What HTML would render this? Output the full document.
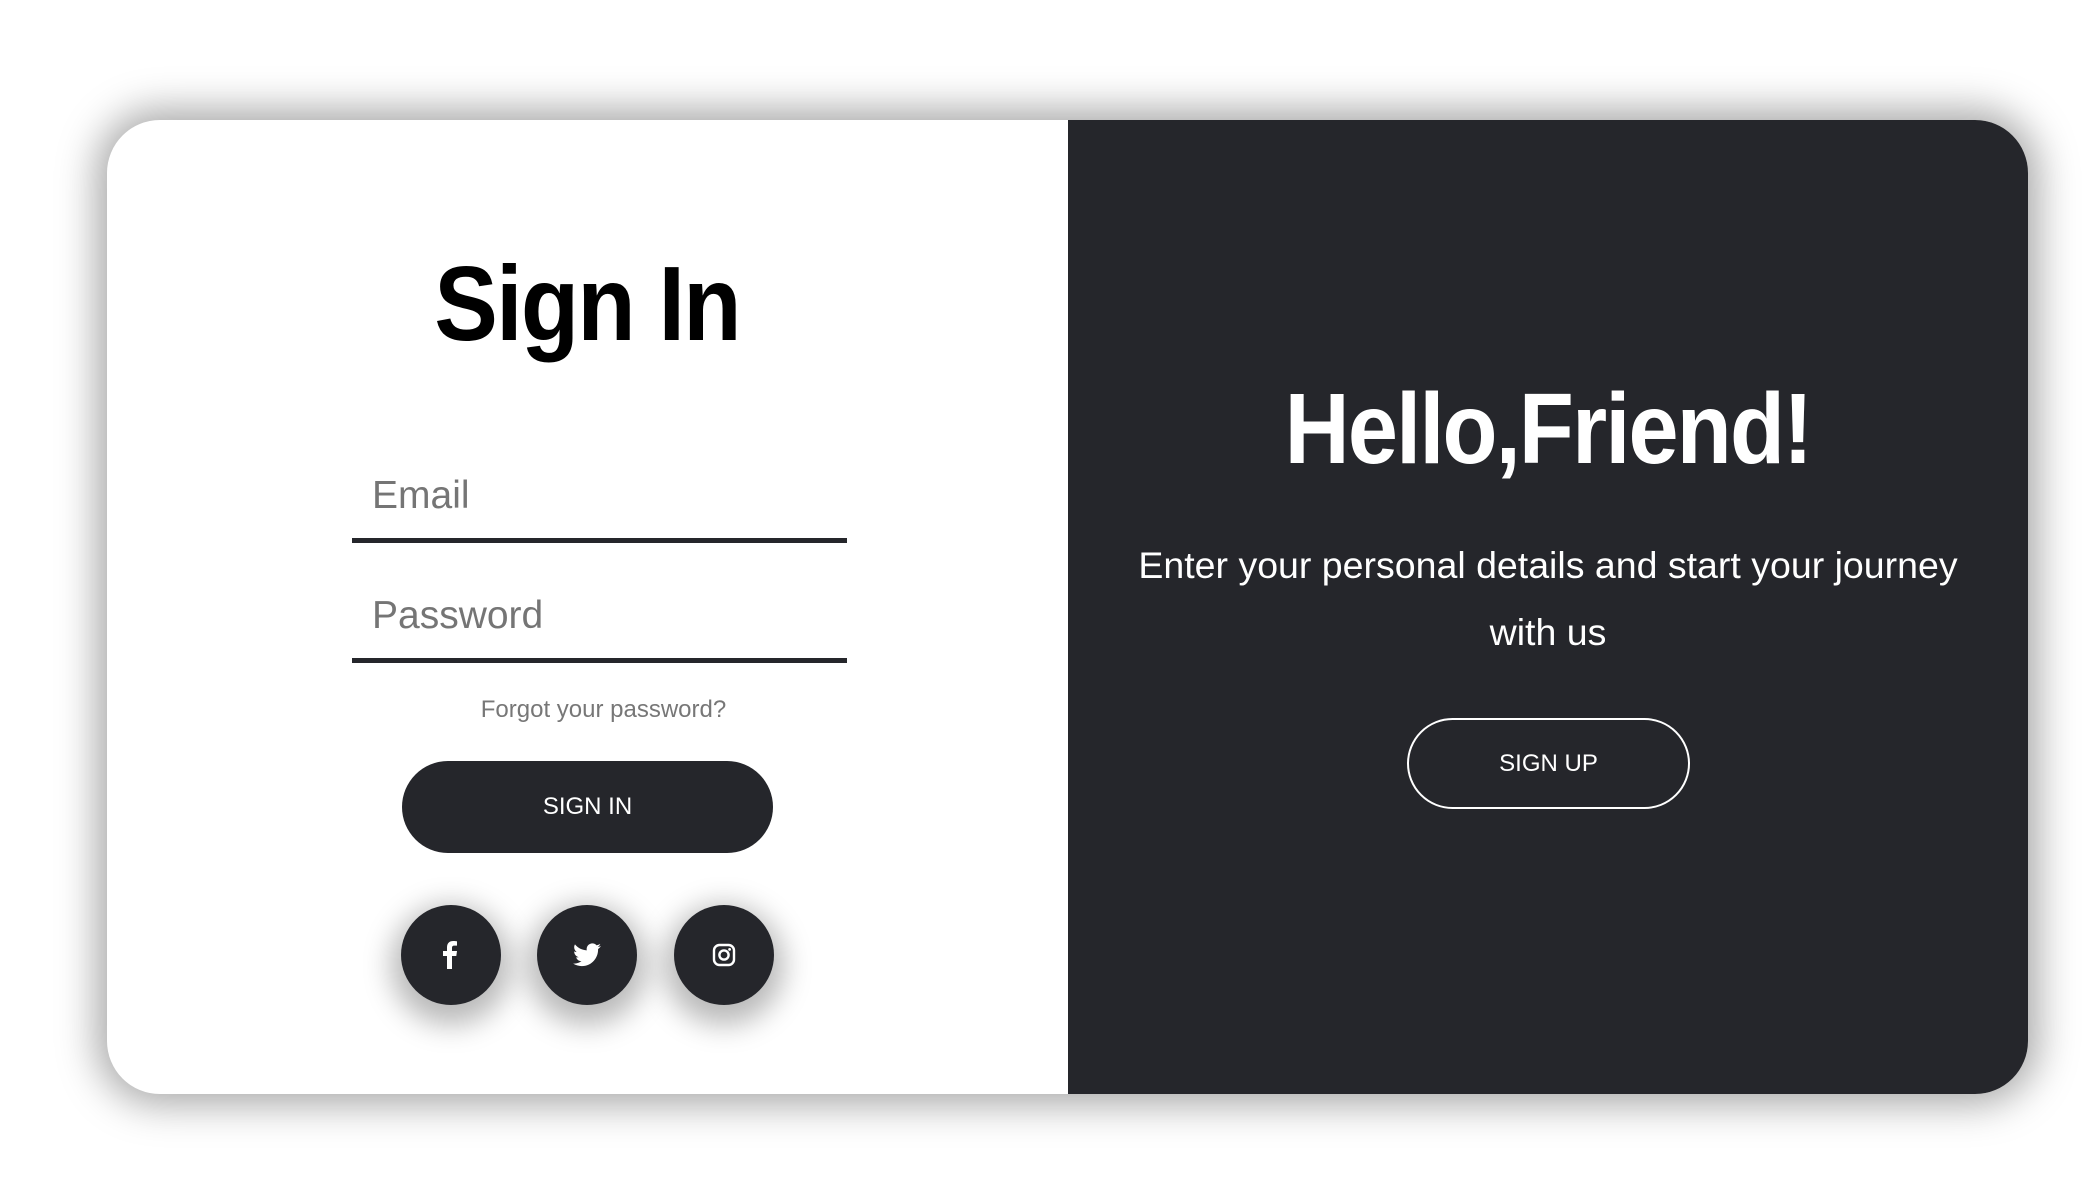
<!DOCTYPE html>
<html><head><meta charset="utf-8"><style>
*{margin:0;padding:0;box-sizing:border-box}
body{width:2097px;height:1191px;background:#fff;font-family:"Liberation Sans",Arial,sans-serif;position:relative;overflow:hidden}
.card{position:absolute;left:107px;top:120px;width:1921px;height:974px;border-radius:53px;background:#fff;box-shadow:0 0 40px 10px rgba(0,0,0,.35);overflow:hidden}
.right{position:absolute;left:961px;top:0;width:960px;height:974px;background:#25262b}
.a{position:absolute;white-space:nowrap}
.line{position:absolute;left:245px;width:495px;height:5px;background:#25262b}
.btn{position:absolute;border-radius:46px;color:#fff;font-size:24px;display:flex;align-items:center;justify-content:center}
.c{position:absolute;top:785px;width:100px;height:100px;border-radius:50%;background:#25262b;box-shadow:0 10px 28px 10px rgba(0,0,0,.28);display:flex;align-items:center;justify-content:center}
</style></head><body>
<div class="card">
  <div class="a" style="left:0;top:124px;font-size:106px;font-weight:bold;color:#000;letter-spacing:-2px;width:960px;text-align:center;transform:scaleX(0.9);">Sign In</div>
  <div class="a" style="left:265px;top:354px;font-size:39px;color:#757575">Email</div>
  <div class="line" style="top:418px"></div>
  <div class="a" style="left:265px;top:474px;font-size:39px;color:#757575">Password</div>
  <div class="line" style="top:538px"></div>
  <div class="a" style="left:370px;width:253px;text-align:center;top:576px;font-size:24px;color:#777">Forgot your password?</div>
  <div class="btn" style="left:295px;top:641px;width:371px;height:92px;background:#25262b">SIGN IN</div>
  <div class="c" style="left:294px"><svg width="22" height="28" viewBox="0 0 22 28"><path d="M14 28V15h4.3l.7-5h-5V7c0-1.4.5-2.4 2.5-2.4H19V.3C18.5.2 17 0 15.2 0 11.5 0 9 2.2 9 6.4V10H5v5h4v13z" fill="#fff" transform="translate(-2 0)"/></svg></div>
  <div class="c" style="left:430px"><svg width="28" height="24" viewBox="0 0 24 20"><path d="M24 2.4c-.9.4-1.8.6-2.8.8 1-.6 1.8-1.6 2.2-2.7-1 .6-2 1-3.1 1.2C19.3.6 18 0 16.6 0c-2.7 0-4.9 2.2-4.9 4.9 0 .4 0 .8.1 1.1C7.7 5.8 4.1 3.9 1.7.9c-.4.7-.7 1.6-.7 2.5 0 1.7.9 3.2 2.2 4.1-.8 0-1.6-.2-2.2-.6v.1c0 2.4 1.7 4.4 3.9 4.8-.4.1-.8.2-1.3.2-.3 0-.6 0-.9-.1.6 2 2.4 3.4 4.6 3.4-1.7 1.3-3.8 2.1-6.1 2.1-.4 0-.8 0-1.2-.1 2.2 1.4 4.8 2.2 7.5 2.2 9.1 0 14-7.5 14-14v-.6c1-.7 1.8-1.6 2.5-2.5z" fill="#fff"/></svg></div>
  <div class="c" style="left:567px"><svg width="24" height="24" viewBox="0 0 24 24"><rect x="2" y="2" width="20" height="20" rx="5.5" fill="none" stroke="#fff" stroke-width="2.4"/><circle cx="12" cy="12" r="4.6" fill="none" stroke="#fff" stroke-width="2.4"/><circle cx="17.6" cy="6.4" r="1.4" fill="#fff"/></svg></div>
  <div class="right">
    <div class="a" style="left:0;width:960px;text-align:center;top:252px;font-size:100px;font-weight:bold;color:#fff;letter-spacing:-2px;transform:scaleX(0.9)">Hello,Friend!</div>
    <div class="a" style="left:0;width:960px;text-align:center;top:412px;font-size:37.5px;line-height:67px;color:#fff;white-space:normal;padding:0 40px">Enter your personal details and start your journey with us</div>
    <div class="btn" style="left:339px;top:598px;width:283px;height:91px;border:2px solid #fff;background:transparent">SIGN UP</div>
  </div>
</div>
</body></html>
